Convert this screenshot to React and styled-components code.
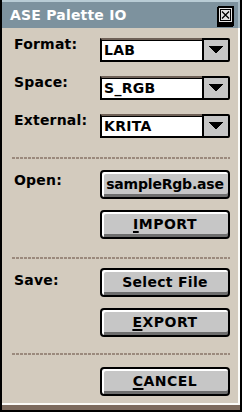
import React from 'react';
import styled, { createGlobalStyle } from 'styled-components';

const Global = createGlobalStyle`
  html, body { margin: 0; padding: 0; background: #000; }
  body {
    width: 242px; height: 412px; overflow: hidden;
    font-family: "DejaVu Sans", "Liberation Sans", sans-serif;
    font-weight: bold;
  }
  * { box-sizing: border-box; }
`;

const Window = styled.div`
  width: 242px;
  height: 412px;
  border: 2px solid #000;
  border-top: 0;
  display: flex;
  flex-direction: column;
  background: #d3cbbe;
`;

const TitleBar = styled.div`
  height: 28px;
  flex: none;
  border-top: 2px solid #b9ccd5;
  border-right: 2px solid #a9bcc6;
  background: #7d929e;
  display: flex;
  align-items: center;
  justify-content: space-between;
  padding: 0 4px 0 8px;
`;

const Title = styled.div`
  color: #fff;
  font-size: 14px;
  letter-spacing: 0.2px;
  line-height: 16px;
`;

const CloseBtn = styled.div`
  width: 17px;
  height: 21px;
  margin-top: 2px;
  display: flex;
`;

const Body = styled.div`
  flex: 1;
  border-right: 2px solid #fbfbf8;
  border-bottom: 2px solid #fbfbf8;
  padding: 10px 8px 0 10px;
  display: flex;
  flex-direction: column;
`;

const BottomBand = styled.div`
  height: 5px;
  flex: none;
  background: #7d6b5e;
`;

const Grid = styled.div`
  display: grid;
  grid-template-columns: 88px 1fr;
  row-gap: ${p => p.$gap}px;
  align-items: start;
`;

const Label = styled.div`
  font-size: 14px;
  letter-spacing: 0.2px;
  line-height: 14px;
  color: #000;
  padding-left: 2px;
  margin-top: ${p => p.$top}px;
`;

const Combo = styled.div`
  display: flex;
  height: 24px;
`;

const Field = styled.div`
  flex: 1;
  background: #fff;
  border-top: 2px solid #6f6157;
  border-left: 2px solid #000;
  border-bottom: 2px solid #000;
  box-shadow: inset 0 1px 0 #000;
  font-size: 14px;
  letter-spacing: 0.3px;
  line-height: 20px;
  padding-left: 2px;
  color: #000;
`;

const DropBtn = styled.div`
  width: 28px;
  background: #c6c6c6;
  border: 2px solid #000;
  border-radius: 0 2px 2px 0;
  display: flex;
  align-items: center;
  justify-content: center;
`;

const Separator = styled.div`
  height: 2px;
  margin: ${p => p.$top}px 0 ${p => p.$bottom}px 0;
  background-image: repeating-linear-gradient(90deg, #9b8a7d 0 3px, transparent 3px 4px);
`;

const Button = styled.div`
  height: 29px;
  width: 100%;
  border: 2px solid #000;
  border-radius: 4px;
  background: #c6c6c6;
  box-shadow: inset 2px 2px 0 #fff, inset 0 -3px 0 #6e6e6e;
  display: flex;
  align-items: center;
  justify-content: center;
  padding-bottom: 2px;
  font-size: 14px;
  letter-spacing: ${p => p.$ls}px;
  color: #000;
  white-space: nowrap;
`;

const Key = styled.span`
  text-decoration: underline;
  text-decoration-thickness: 2px;
  text-underline-offset: 2px;
`;

const Triangle = () => (
  <svg width="14" height="8" viewBox="0 0 14 8" shapeRendering="crispEdges">
    <polygon points="0,0 14,0 7,8" fill="#000" />
  </svg>
);

const CloseIcon = () => (
  <svg width="17" height="21" viewBox="0 0 17 21" shapeRendering="crispEdges">
    <rect x="0" y="0" width="17" height="21" rx="2" fill="#000" />
    <rect x="2" y="2" width="13" height="14" fill="#e4e4e4" />
    <rect x="3.5" y="3.5" width="10" height="11" fill="none" stroke="#000" strokeWidth="1" />
    <path d="M5 5.5 L12 12.5 M12 5.5 L5 12.5" stroke="#000" strokeWidth="1.3" shapeRendering="auto" />
  </svg>
);

const rows = [
  ['Format:', 'LAB'],
  ['Space:', 'S_RGB'],
  ['External:', 'KRITA'],
];

export default function App() {
  return (
    <>
      <Global />
      <Window>
        <TitleBar>
          <Title>ASE Palette IO</Title>
          <CloseBtn><CloseIcon /></CloseBtn>
        </TitleBar>
        <Body>
          <Grid $gap={14}>
            {rows.map(([l, v]) => (
              <React.Fragment key={l}>
                <Label $top={-1}>{l}</Label>
                <Combo>
                  <Field>{v}</Field>
                  <DropBtn><Triangle /></DropBtn>
                </Combo>
              </React.Fragment>
            ))}
          </Grid>
          <Separator $top={19} $bottom={11} />
          <Grid $gap={11}>
            <Label $top={3}>Open:</Label>
            <Button $ls={-0.2}>sampleRgb.ase</Button>
            <div />
            <Button $ls={0.5}><Key>I</Key>MPORT</Button>
          </Grid>
          <Separator $top={18} $bottom={9} />
          <Grid $gap={11}>
            <Label $top={5}>Save:</Label>
            <Button $ls={0.3}>Select File</Button>
            <div />
            <Button $ls={0.5}><Key>E</Key>XPORT</Button>
          </Grid>
          <Separator $top={16} $bottom={12} />
          <Grid $gap={11}>
            <div />
            <Button $ls={0.5}><Key>C</Key>ANCEL</Button>
          </Grid>
        </Body>
        <BottomBand />
      </Window>
    </>
  );
}
